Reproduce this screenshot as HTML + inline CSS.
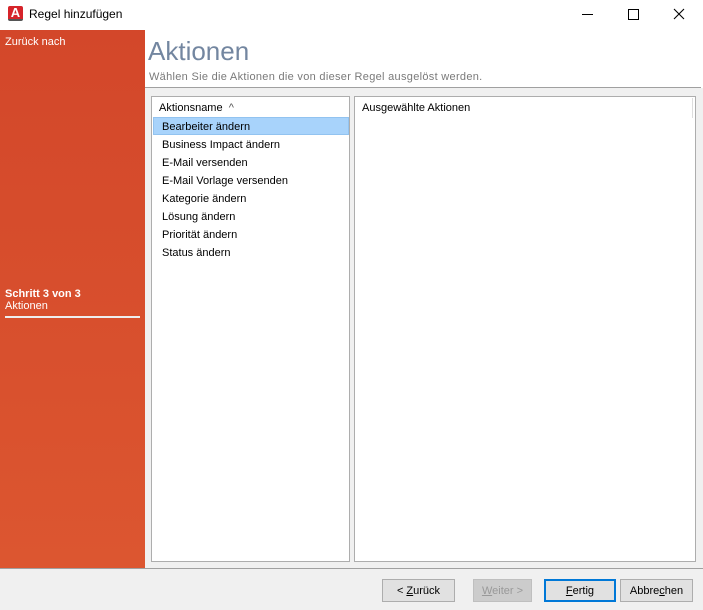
<!DOCTYPE html>
<html><head><style>
body{margin:0;width:703px;height:610px;overflow:hidden;background:#f0f0f0;font-family:"Liberation Sans",sans-serif;font-size:12px;position:relative}
.a{position:absolute}
</style></head><body>
<div class="a" style="left:0;top:0;width:703px;height:30px;background:#fff"></div>
<div class="a" style="left:8px;top:6px;width:15px;height:15px;background:#d6242a;border-radius:2px;border-bottom:2px solid #555;box-sizing:border-box;color:#fff;font-weight:bold;font-size:13px;line-height:14px;text-align:center">A</div>
<div class="a" style="left:29px;top:7px;font-size:12px;color:#000">Regel hinzufügen</div>
<div class="a" style="left:582px;top:14px;width:11px;height:1px;background:#000"></div>
<div class="a" style="left:628px;top:9px;width:9px;height:9px;border:1px solid #000"></div>
<svg class="a" style="left:673px;top:8px" width="12" height="12"><path d="M1 1L11 11M11 1L1 11" stroke="#000" stroke-width="1.1"/></svg>
<div class="a" style="left:0;top:30px;width:145px;height:538px;background:linear-gradient(#d3472a,#dc5630)"></div>
<div class="a" style="left:5px;top:36px;color:#fff;font-size:11px">Zurück nach</div>
<div class="a" style="left:5px;top:288px;color:#fff;font-size:11px;font-weight:bold">Schritt 3 von 3</div>
<div class="a" style="left:5px;top:300px;color:#fff;font-size:11px">Aktionen</div>
<div class="a" style="left:5px;top:316px;width:135px;height:2px;background:#eee"></div>
<div class="a" style="left:145px;top:30px;width:558px;height:58px;background:#fff"></div>
<div class="a" style="left:148px;top:36px;font-size:26px;color:#7386a0;font-weight:300">Aktionen</div>
<div class="a" style="left:149px;top:71px;font-size:11px;color:#7a7a7a;letter-spacing:0.3px">Wählen Sie die Aktionen die von dieser Regel ausgelöst werden.</div>
<div class="a" style="left:145px;top:87px;width:556px;height:1px;background:#a0a0a0"></div>
<div class="a" style="left:151px;top:96px;width:197px;height:464px;background:#fff;border:1px solid #adadad"></div>
<div class="a" style="left:159px;top:102px;font-size:11px;color:#000">Aktionsname &nbsp;<span style="color:#555">^</span></div>
<div class="a" style="left:153px;top:117px;width:194px;height:16px;background:#a8d3fb;border:1px solid #92c3f0"></div>
<div class="a" style="left:162px;top:118px;font-size:11px;line-height:18px;color:#000">Bearbeiter ändern<br>Business Impact ändern<br>E-Mail versenden<br>E-Mail Vorlage versenden<br>Kategorie ändern<br>Lösung ändern<br>Priorität ändern<br>Status ändern</div>
<div class="a" style="left:354px;top:96px;width:340px;height:464px;background:#fff;border:1px solid #adadad"></div>
<div class="a" style="left:692px;top:98px;width:1px;height:20px;background:#ddd"></div>
<div class="a" style="left:362px;top:102px;font-size:11px;color:#000">Ausgewählte Aktionen</div>
<div class="a" style="left:0;top:568px;width:703px;height:1px;background:#a0a0a0"></div>
<div class="a" style="left:382px;top:579px;width:71px;height:21px;background:#e1e1e1;border:1px solid #adadad;font-size:11px;text-align:center;line-height:22px">&lt; <u>Z</u>urück</div>
<div class="a" style="left:473px;top:579px;width:57px;height:21px;background:#ccc;border:1px solid #bfbfbf;color:#999;font-size:11px;text-align:center;line-height:22px"><u>W</u>eiter &gt;</div>
<div class="a" style="left:544px;top:579px;width:68px;height:19px;background:#e1e1e1;border:2px solid #0078d7;font-size:11px;text-align:center;line-height:20px"><u>F</u>ertig</div>
<div class="a" style="left:620px;top:579px;width:71px;height:21px;background:#e1e1e1;border:1px solid #adadad;font-size:11px;text-align:center;line-height:22px">Abbre<u>c</u>hen</div>
</body></html>
